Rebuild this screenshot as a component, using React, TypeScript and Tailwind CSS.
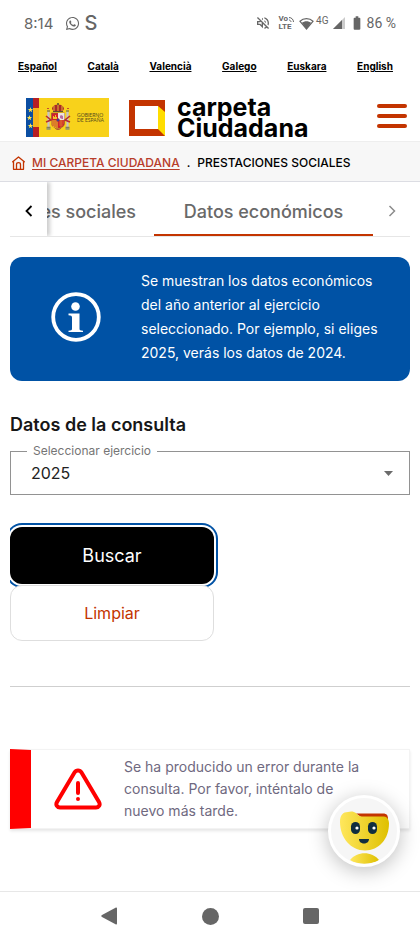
import { FaWhatsapp } from 'react-icons/fa'
import { MdBatteryFull, MdOutlineVolumeOff } from 'react-icons/md'

const languages = ['Español', 'Català', 'Valencià', 'Galego', 'Euskara', 'English']

function StatusBar() {
  return (
    <div className="flex h-[46px] items-center justify-between px-6 text-[#666]">
      <div className="flex items-center gap-1">
        <span className="mr-2 text-[15px] leading-none">8:14</span>
        <FaWhatsapp size={15} />
        <span className="text-xl font-medium leading-none">S</span>
      </div>

      <div className="flex items-center gap-1 font-['Roboto',sans-serif]">
        <MdOutlineVolumeOff size={16} />
        <div className="ml-1 flex flex-col text-[8px] font-bold leading-[8px]">
          <span className="flex items-center">
            Vo
            <svg width="7" height="7" viewBox="0 0 7 7" fill="none" stroke="currentColor">
              <path d="M1 1.500c2.500 0 4.500 2 4.500 4.500M1 4c1 0 2 1 2 2" />
            </svg>
          </span>
          <span>LTE</span>
        </div>
        <svg width="15" height="13" viewBox="0 0 15 13">
          <path d="M1 4.300C4.600.8 10.400.8 14 4.300L7.500 12z" fill="none" stroke="currentColor" strokeWidth="1.200" />
          <path d="M2.800 5.800c2.700-2.200 6.700-2.200 9.400 0L7.500 12z" fill="currentColor" />
        </svg>
        <span className="-ml-0.5 mb-1 text-[10px] leading-none">4G</span>
        <svg width="12" height="12" viewBox="0 0 12 12">
          <path d="M12 0v12H0z" fill="#ccc" />
          <path d="M9 3v9H0z" fill="currentColor" />
        </svg>
        <MdBatteryFull size={16} />
        <span className="-ml-0.5 text-sm leading-none">86 %</span>
      </div>
    </div>
  )
}

function GovernmentLogo() {
  return (
    <svg width="83" height="39" viewBox="0 0 83 39" role="img" aria-label="Gobierno de España">
      <path fill="#f8d21b" d="M0 0h83v39H0z" />
      <path fill="#0b4ea2" d="M0 0h7v39H0z" />
      <path fill="#b61f25" d="M7 0h6v10H7zM7 29h6v10H7z" />
      <path fill="#f5b51b" d="M7 10h6v19H7z" />
      <g fill="#ffe34d">
        <path id="star" d="m4.500 9 .7 2h2l-1.600 1.200.6 2-1.700-1.200-1.700 1.200.6-2L1.800 11h2z" />
        <use href="#star" x="-1" y="8" />
        <use href="#star" y="16" />
      </g>
      {/* coat of arms */}
      <path d="M26 11c0-3 4-5 6-4 2-1 6 1 6 4l-2 3h-8z" fill="#aa292b" />
      <path d="M28 8v5M32 6v7M36 8v5" stroke="#e5ba2e" strokeWidth="1" />
      <path d="M32 5v2M31 6h2M27 13.500h10" stroke="#5c5130" strokeWidth="1.200" />
      <path d="M25.500 15h13v10c0 7-13 7-13 0z" fill="#d3202d" stroke="#8f5d37" strokeWidth=".7" />
      <path d="M32 15h6.500v7H32z" fill="#eee4de" />
      <path d="M34 20v-2l1-1 2 1v3h-1z" fill="#b56aa2" />
      <path d="M27 21v-3h1v1h1v-2h1v2h1v2z" fill="#f0c52d" />
      <path d="M25.500 22H32v8c-4 0-6.500-2-6.500-5z" fill="#f2c127" />
      <path d="M27 22v6M29 22v7M31 22v8" stroke="#c02b2d" strokeWidth=".9" />
      <path d="M33 23h5M33 25h5M33 27h4M35 22v8" stroke="#e3aa2e" strokeWidth=".5" />
      <circle cx="32" cy="22" r="1.500" fill="#264b9c" stroke="#c5212c" strokeWidth=".5" />
      <path d="M22.500 14v15M41.500 14v15" stroke="#c5c2c8" strokeWidth="2.200" />
      <path d="M20.500 29.500h4M39.500 29.500h4M21 13h3M40 13h3" stroke="#857d5b" strokeWidth="1.500" />
      <path d="M20.500 31h4M39.500 31h4" stroke="#5377a3" strokeWidth="1" />
      <path d="m20 18 5 4-5 2M44 18l-5 4 5 2M22 11v-1M42 11v-1" fill="none" stroke="#b72d32" strokeWidth="1.600" />
      <path d="M29 30c1 2 5 2 6 0" stroke="#aa5330" fill="none" />
      <text x="51" y="18.500" fontSize="5" fill="#574b1d" fontFamily="Lato, sans-serif">GOBIERNO</text>
      <text x="51" y="23.500" fontSize="5" fill="#574b1d" fontFamily="Lato, sans-serif">DE ESPAÑA</text>
    </svg>
  )
}

function CarpetaLogo() {
  return (
    <a href="#" className="flex items-center gap-3">
      <svg width="36" height="36" viewBox="0 0 36 36" aria-hidden="true">
        <path fill="#c33400" d="M0 0h36v36H0z" />
        <path fill="#fff" d="M6 6h23v23H6z" />
        <path fill="#ffdd00" d="m29 6 7 6v24l-7-7z" />
      </svg>
      <span className="flex flex-col font-['Inter',sans-serif] text-[25px] font-bold leading-[21px] text-black">
        <span>carpeta</span>
        <span>Ciudadana</span>
      </span>
    </a>
  )
}

function Header() {
  return (
    <header>
      <nav className="flex h-10 items-center justify-between pl-[18px] pr-[27px]">
        {languages.map((language) => (
          <a
            key={language}
            href="#"
            className="text-[10px] font-bold leading-none text-black underline underline-offset-1"
          >
            {language}
          </a>
        ))}
      </nav>

      <div className="flex h-[55px] items-center justify-between pb-px pl-[26px] pr-[13px] pt-[9px]">
        <div className="flex items-center gap-5">
          <GovernmentLogo />
          <CarpetaLogo />
        </div>
        <button type="button" aria-label="Menú" className="mb-1 flex w-[30px] flex-col gap-[6px]">
          <span className="h-1 w-full rounded-full bg-[#c33400]" />
          <span className="h-1 w-full rounded-full bg-[#c33400]" />
          <span className="h-1 w-full rounded-full bg-[#c33400]" />
        </button>
      </div>

      <nav className="flex h-[41px] items-center border-y border-t-[#eee] border-b-[#dcdde3] bg-[#f7f7f7] px-3 pt-0.5 text-xs font-medium text-black">
        <svg width="13" height="14" viewBox="0 0 13 14" fill="none" stroke="#c33400" strokeWidth="1.300">
          <path d="M.7 5.800 6.500.9l5.800 4.900M1.500 5.500v7.800h10V5.500" strokeLinejoin="round" strokeLinecap="round" />
          <path d="M4.500 13V8.500c0-2.400 4-2.400 4 0V13" />
        </svg>
        <a href="#" className="ml-[7px] text-[#b83d2b] underline underline-offset-2">
          MI CARPETA CIUDADANA
        </a>
        <span className="mx-[7px]">.</span>
        <span>PRESTACIONES SOCIALES</span>
      </nav>
    </header>
  )
}

function Tabs() {
  return (
    <div role="tablist" className="mx-[10px] flex h-[55px] border-b border-[#e6e6e6] text-lg font-medium text-[#696969]">
      <button
        type="button"
        aria-label="Anterior"
        className="z-10 flex w-[37px] shrink-0 items-center justify-center bg-white pt-1 text-black shadow-[3px_0_4px_rgba(0,0,0,0.2)] [clip-path:inset(0_-8px_0_0)]"
      >
        <svg width="8" height="12" viewBox="0 0 8 12" fill="none" stroke="currentColor" strokeWidth="1.800">
          <path d="M6.500 1 1.500 6l5 5" />
        </svg>
      </button>
      <button
        type="button"
        role="tab"
        aria-selected="false"
        className="flex w-[107px] shrink-0 items-center justify-end overflow-hidden whitespace-nowrap pr-[18px] pt-[6px]"
      >
        Prestaciones sociales
      </button>
      <button
        type="button"
        role="tab"
        aria-selected="true"
        className="grow whitespace-nowrap border-b-2 border-[#c33400] pt-2"
      >
        Datos económicos
      </button>
      <button
        type="button"
        aria-label="Siguiente"
        className="flex w-[37px] shrink-0 items-center justify-center pt-1 text-[#8c8c8c]"
      >
        <svg width="8" height="12" viewBox="0 0 8 12" fill="none" stroke="currentColor" strokeWidth="1.500">
          <path d="m1.500 1 5 5-5 5" />
        </svg>
      </button>
    </div>
  )
}

function InfoBox() {
  return (
    <div className="flex items-center rounded-xl bg-[#0052a5] pb-4 pt-3 text-white">
      <div className="flex w-[131px] shrink-0 justify-center">
        <svg width="50" height="50" viewBox="0 0 50 50">
          <circle cx="25" cy="25" r="22.800" fill="none" stroke="currentColor" strokeWidth="3.800" />
          <circle cx="24.500" cy="14.500" r="4.300" fill="currentColor" />
          <path fill="currentColor" d="M17.500 21.500h11V37c0 1.200 1 1.500 3.500 1.700V40H17.500v-1.300c2.500-.2 3.500-.5 3.500-1.700V25.500c0-1.500-1-2-3.500-2.200z" />
        </svg>
      </div>
      <p className="pr-6 text-sm leading-6">
        Se muestran los datos económicos del año anterior al ejercicio seleccionado. Por ejemplo, si
        eliges 2025, verás los datos de 2024.
      </p>
    </div>
  )
}

function QueryForm() {
  return (
    <form className="mt-8" onSubmit={(event) => event.preventDefault()}>
      <h2 className="text-lg font-semibold leading-6 text-[#171717]">Datos de la consulta</h2>

      <fieldset className="relative mt-1 h-[54px] border border-[#929292] pl-4">
        <legend className="px-[6px] text-xs leading-5 text-[#757575]">
          <label htmlFor="ejercicio">Seleccionar ejercicio</label>
        </legend>
        <select
          id="ejercicio"
          defaultValue="2025"
          className="-mt-1 block h-8 w-full appearance-none bg-transparent pl-1 text-base text-[#222]"
        >
          <option>2025</option>
          <option>2024</option>
          <option>2023</option>
        </select>
        <svg className="pointer-events-none absolute right-4 top-[10px]" width="9" height="5" viewBox="0 0 9 5">
          <path d="M0 0h9L4.500 5z" fill="#6b6b6b" />
        </svg>
      </fieldset>

      <div className="mt-[27px] flex flex-col items-start overflow-hidden pt-[5px]">
        <button
          type="submit"
          className="h-[57px] w-[204px] rounded-xl bg-black text-lg text-white shadow-[0_0_0_2px_#fff,0_0_0_4px_#0052a5]"
        >
          Buscar
        </button>
        <button
          type="reset"
          className="mt-px h-14 w-[204px] rounded-xl border border-[#dedede] bg-white text-base text-[#c33400]"
        >
          Limpiar
        </button>
      </div>
    </form>
  )
}

function ErrorMessage() {
  return (
    <div
      role="alert"
      className="mt-[62px] flex h-20 items-center border border-l-[21px] border-[#f3f3f3] border-l-[#ff0000] shadow-[0_2px_3px_rgba(0,0,0,0.1)]"
    >
      <div className="flex w-[93px] shrink-0 justify-center">
        <svg width="48" height="42" viewBox="0 0 48 42" fill="none" stroke="#ff0000" strokeWidth="4">
          <path d="M20.500 4.500c1.600-2.700 5.400-2.700 7 0L45 34c1.600 2.800 0 5.500-3 5.500H6c-3 0-4.600-2.700-3-5.500z" strokeLinejoin="round" />
          <path d="M24 15v10M24 31v.1" strokeLinecap="round" />
        </svg>
      </div>
      <p className="pr-10 text-sm leading-[22px] text-[#6f6980]">
        Se ha producido un error durante la consulta. Por favor, inténtalo de nuevo más tarde.
      </p>
    </div>
  )
}

function ChatButton() {
  return (
    <button
      type="button"
      aria-label="Asistente virtual"
      className="absolute bottom-6 right-5 size-[72px] overflow-hidden rounded-full border-[3px] border-white bg-[#f6f6f6] shadow-[0_4px_20px_rgba(0,0,0,0.25)]"
    >
      <svg width="66" height="66" viewBox="0 0 66 66">
        <defs>
          <linearGradient id="face">
            <stop stopColor="#ffe75d" />
            <stop offset="1" stopColor="#dfc000" />
          </linearGradient>
        </defs>
        <path fill="#c33400" d="M25 15.500h27c4 0 5 2 5 6L30 19z" />
        <path fill="url(#face)" d="M9 24c0-7 3-10 8-10 3-1 6-.5 8 1 2 2 3 3.500 6 3.500h22c3 0 5 3 5 7C58 41 48 52.500 34 52.500S9 40 9 24z" />
        <path fill="url(#face)" d="M19 62c7-9 22-9 29 0-8 5-21 5-29 0z" />
        <rect x="20" y="24" width="9" height="12" rx="4.500" fill="#102e3f" />
        <rect x="37" y="24" width="9" height="12" rx="4.500" fill="#102e3f" />
        <circle cx="26" cy="30" r="1.600" fill="#fff" />
        <circle cx="43" cy="30" r="1.600" fill="#fff" />
        <path d="M28 41h10c0 6-10 6-10 0z" fill="#102e3f" />
      </svg>
    </button>
  )
}

function NavigationBar() {
  return (
    <nav className="flex h-[49px] items-center justify-center gap-[84px] border-t border-[#e7e7e7] text-[#666]">
      <button type="button" aria-label="Atrás">
        <svg width="17" height="18" viewBox="0 0 17 18" fill="currentColor">
          <path d="M14.500.7c1-.6 1.500-.1 1.500.8v15c0 .9-.5 1.400-1.500.8L1 10c-1-.6-1-1.400 0-2z" />
        </svg>
      </button>
      <button type="button" aria-label="Inicio" className="size-[17px] rounded-full bg-current" />
      <button type="button" aria-label="Recientes" className="size-4 rounded-xs bg-current" />
    </nav>
  )
}

export default function App() {
  return (
    <div className="flex min-h-screen flex-col bg-white font-['Inter',sans-serif]">
      <StatusBar />
      <Header />
      <Tabs />
      <main className="relative grow px-[10px] pt-5">
        <InfoBox />
        <QueryForm />
        <hr className="mt-[45px] border-[#cfcfcf]" />
        <ErrorMessage />
        <ChatButton />
      </main>
      <NavigationBar />
    </div>
  )
}
